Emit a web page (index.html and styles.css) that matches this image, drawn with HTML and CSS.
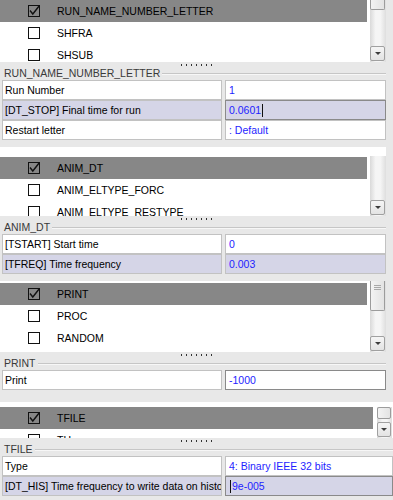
FILE: index.html
```html
<!DOCTYPE html>
<html lang="en">
<head>
    <meta charset="UTF-8">
    <meta name="viewport" content="width=device-width, initial-scale=1.0">
    <title>Engine options</title>
    <link rel="stylesheet" href="styles.css">
</head>
<body>
    <div class="panel p1">
        <div class="list">
            <div class="items">
                <div class="item sel">
                    <svg class="cb" viewBox="0 0 12 12"><rect x="0.5" y="0.5" width="11" height="11"/><path class="tick" d="M2 5.5 L4.8 9 L11.5 0.5"/></svg>
                    <span>RUN_NAME_NUMBER_LETTER</span>
                </div>
                <div class="item">
                    <svg class="cb" viewBox="0 0 12 12"><rect x="0.5" y="0.5" width="11" height="11"/></svg>
                    <span>SHFRA</span>
                </div>
                <div class="item">
                    <svg class="cb" viewBox="0 0 12 12"><rect x="0.5" y="0.5" width="11" height="11"/></svg>
                    <span>SHSUB</span>
                </div>
            </div>
            <div class="vscroll">
                <div class="thumb stub"></div>
                <div class="track"></div>
                <div class="arrow"></div>
            </div>
        </div>
        <div class="grip"></div>
        <div class="caption">RUN_NAME_NUMBER_LETTER</div>
        <div class="prop">
            <div class="name">Run Number</div>
            <div class="value">1</div>
        </div>
        <div class="prop alt">
            <div class="name">[DT_STOP] Final time for run</div>
            <div class="value edit">0.0601<span class="caret"></span></div>
        </div>
        <div class="prop">
            <div class="name">Restart letter</div>
            <div class="value">: Default</div>
        </div>
    </div>

    <div class="panel p2">
        <div class="list">
            <div class="items">
                <div class="item sel">
                    <svg class="cb" viewBox="0 0 12 12"><rect x="0.5" y="0.5" width="11" height="11"/><path class="tick" d="M2 5.5 L4.8 9 L11.5 0.5"/></svg>
                    <span>ANIM_DT</span>
                </div>
                <div class="item">
                    <svg class="cb" viewBox="0 0 12 12"><rect x="0.5" y="0.5" width="11" height="11"/></svg>
                    <span>ANIM_ELTYPE_FORC</span>
                </div>
                <div class="item">
                    <svg class="cb" viewBox="0 0 12 12"><rect x="0.5" y="0.5" width="11" height="11"/></svg>
                    <span>ANIM_ELTYPE_RESTYPE</span>
                </div>
            </div>
            <div class="vscroll">
                <div class="track"></div>
                <div class="arrow"></div>
            </div>
        </div>
        <div class="grip"></div>
        <div class="caption">ANIM_DT</div>
        <div class="prop">
            <div class="name">[TSTART] Start time</div>
            <div class="value">0</div>
        </div>
        <div class="prop alt">
            <div class="name">[TFREQ] Time frequency</div>
            <div class="value">0.003</div>
        </div>
    </div>

    <div class="panel p3">
        <div class="list">
            <div class="items">
                <div class="item sel">
                    <svg class="cb" viewBox="0 0 12 12"><rect x="0.5" y="0.5" width="11" height="11"/><path class="tick" d="M2 5.5 L4.8 9 L11.5 0.5"/></svg>
                    <span>PRINT</span>
                </div>
                <div class="item">
                    <svg class="cb" viewBox="0 0 12 12"><rect x="0.5" y="0.5" width="11" height="11"/></svg>
                    <span>PROC</span>
                </div>
                <div class="item">
                    <svg class="cb" viewBox="0 0 12 12"><rect x="0.5" y="0.5" width="11" height="11"/></svg>
                    <span>RANDOM</span>
                </div>
            </div>
            <div class="vscroll">
                <div class="thumb lined"></div>
                <div class="track"></div>
                <div class="arrow"></div>
            </div>
        </div>
        <div class="grip"></div>
        <div class="caption">PRINT</div>
        <div class="prop">
            <div class="name">Print</div>
            <div class="value edit">-1000</div>
        </div>
    </div>

    <div class="panel p4">
        <div class="list">
            <div class="items">
                <div class="item sel">
                    <svg class="cb" viewBox="0 0 12 12"><rect x="0.5" y="0.5" width="11" height="11"/><path class="tick" d="M2 5.5 L4.8 9 L11.5 0.5"/></svg>
                    <span>TFILE</span>
                </div>
                <div class="item">
                    <svg class="cb" viewBox="0 0 12 12"><rect x="0.5" y="0.5" width="11" height="11"/></svg>
                    <span>TH</span>
                </div>
            </div>
            <div class="vscroll">
                <div class="thumb small"></div>
                <div class="track"></div>
                <div class="arrow"></div>
            </div>
        </div>
        <div class="grip"></div>
        <div class="caption">TFILE</div>
        <div class="prop">
            <div class="name">Type</div>
            <div class="value">4: Binary IEEE 32 bits</div>
        </div>
        <div class="prop alt">
            <div class="name">[DT_HIS] Time frequency to write data on history file</div>
            <div class="value edit"><span class="caret"></span>9e-005</div>
        </div>
    </div>
</body>
</html>
```

FILE: styles.css
```css
body {
    margin: 0;
    background: #e8e8e8;
    font-family: "Liberation Sans", Arial, sans-serif;
    font-size: 10.5px;
    color: #000;
}

.panel {
    width: 386px;
    margin-top: 7px;
}
.p1 {
    margin-top: 0;
}
.p4 {
    width: 393px;
    margin-top: 12px;
}

/* checkbox list */
.list {
    display: flex;
    background: #fff;
    overflow: hidden;
}
.p1 .list { height: 62px; }
.p2 .list { height: 69px; }
.p3 .list { height: 71px; }
.p4 .list { height: 36px; }

.items {
    flex: 1;
    min-width: 0;
}
.p2 .items { padding-top: 10px; }
.p3 .items { padding-top: 2px; }
.p4 .items { padding-top: 5px; }

.item {
    display: flex;
    align-items: center;
    height: 22px;
    white-space: nowrap;
}
.item.sel {
    background: #878787;
}
.cb {
    flex: none;
    width: 12px;
    height: 12px;
    margin: 0 17px 0 28px;
    overflow: visible;
}
.cb rect {
    fill: none;
    stroke: #111;
    stroke-width: 1;
}
.cb .tick {
    fill: none;
    stroke: #111;
    stroke-width: 1.4;
}

/* scrollbar */
.vscroll {
    flex: none;
    width: 16px;
    margin-left: 3px;
    display: flex;
    flex-direction: column;
    background: linear-gradient(to right, #d9d9d9, #f5f5f5 35%, #f5f5f5 65%, #dedede);
}
.p2 .vscroll { margin-top: 9px; }
.p4 .vscroll {
    width: 15px;
    margin: 5px 1px 0 4px;
}
.thumb {
    flex: none;
    margin-right: 1px;
    border: 1px solid #9c9c9c;
    border-radius: 2px;
    background: linear-gradient(to right, #f3f3f3, #e3e3e3);
}
.thumb.stub {
    height: 9px;
    border-top: none;
    border-radius: 0 0 2px 2px;
}
.thumb.lined {
    height: 29px;
    border-top: none;
    border-radius: 0 0 2px 2px;
}
.thumb.lined::before {
    content: "";
    display: block;
    width: 7px;
    height: 5px;
    margin: 4px auto 0;
    background: repeating-linear-gradient(#a8a8a8 0 1px, transparent 1px 2px);
}
.thumb.small {
    height: 10px;
}
.track {
    flex: 1;
}
.arrow {
    flex: none;
    height: 15px;
    margin: 0 1px 1px 0;
    box-sizing: border-box;
    border: 1px solid #a0a0a0;
    border-radius: 2px;
    background: linear-gradient(#f5f5f5, #e3e3e3);
    display: flex;
    align-items: center;
    justify-content: center;
}
.arrow::after {
    content: "";
    border-left: 3px solid transparent;
    border-right: 3px solid transparent;
    border-top: 3px solid #3c3c3c;
}

/* splitter handle */
.grip {
    width: 31px;
    height: 2px;
    margin: 2px 0 0 181px;
    background: repeating-linear-gradient(to right, #333 0 1px, transparent 1px 5px);
}

/* property group */
.caption {
    display: flex;
    align-items: center;
    height: 14px;
    padding-left: 4px;
    color: #3a3a3a;
    white-space: nowrap;
}
.caption::after {
    content: "";
    flex: 1;
    margin: 2px 0 0 2px;
    border-top: 1px solid #c6c6c6;
    border-bottom: 1px solid #f7f7f7;
}
.prop {
    display: flex;
    gap: 3px;
    height: 20px;
    padding-left: 2px;
}
.name,
.value {
    box-sizing: border-box;
    border: 1px solid #c2c2c2;
    background: #fff;
    line-height: 18px;
    white-space: nowrap;
    overflow: hidden;
}
.name {
    flex: none;
    width: 220px;
    padding-left: 2px;
}
.value {
    flex: 1;
    padding-left: 3px;
    color: #1e1eff;
}
.prop.alt .name,
.prop.alt .value {
    background: #d5d5e7;
}
.value.edit {
    border-color: #8a8a8a;
}
.caret {
    display: inline-block;
    width: 1px;
    height: 13px;
    margin: 0 1px;
    background: #111;
    vertical-align: -3px;
}
```
